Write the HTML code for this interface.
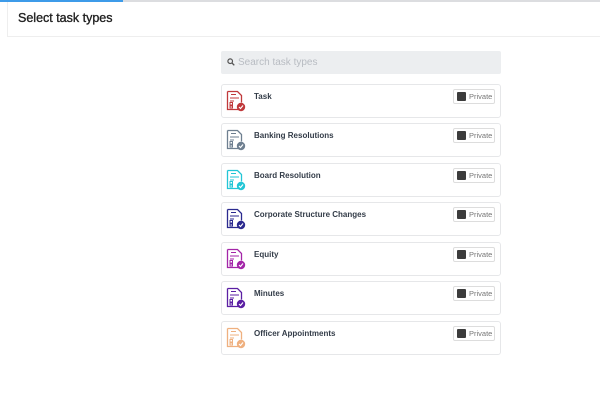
<!DOCTYPE html>
<html><head><meta charset="utf-8"><style>
*{box-sizing:border-box;margin:0;padding:0}
body{width:600px;height:400px;background:#fff;font-family:"Liberation Sans",sans-serif;position:relative;overflow:hidden}
.bar{position:absolute;top:0;left:0;width:600px;height:2px;background:#dcdde0}
.bar i{position:absolute;left:0;top:0;width:123px;height:2px;background:#3d9be9}
.hdr{position:absolute;top:2px;left:7px;right:0;height:35px;border-left:1px solid #eee;border-bottom:1px solid #eee}
.hdr span{position:absolute;left:10px;top:9px;font-size:12.5px;color:#222;-webkit-text-stroke:0.35px #222}
.search{position:absolute;left:221px;top:51px;width:280px;height:23px;background:#eceef0;border-radius:2px}
.search span{position:absolute;left:17px;top:6px;font-size:10px;color:#b8bcc2}
.card{position:absolute;left:221px;width:280px;height:34px;border:1px solid #e6e7e9;border-radius:3px;background:#fff}
.card b{position:absolute;left:32px;top:7px;font-size:8px;color:#333c48;font-weight:bold}
.priv{position:absolute;right:5px;top:4px;width:42px;height:15px;border:1px solid #ddd;border-radius:2px;font-size:7.5px;color:#777}
.priv i{position:absolute;left:3px;top:2px;width:9px;height:9px;background:#3c3c3c;border-radius:1px}
.priv span{position:absolute;left:15px;top:2px}
svg.ic{position:absolute;left:4px;top:5px}
</style></head><body>
<div class="bar"><i></i></div>
<div class="hdr"><span>Select task types</span></div>
<div class="search"><svg style="position:absolute;left:6px;top:7px" width="8" height="8" viewBox="0 0 8 8"><circle cx="3.2" cy="3.2" r="2.3" fill="none" stroke="#555" stroke-width="1.2"/><path d="M5 5l2.3 2.3" stroke="#555" stroke-width="1.3"/></svg><span>Search task types</span></div>

<div id="cards"></div>
<script>
var d=[["Task","#c0393b",84],["Banking Resolutions","#6e7f90",123],["Board Resolution","#22c6d6",163],["Corporate Structure Changes","#2b2a8f",202],["Equity","#a326a8",242],["Minutes","#5b1fa3",281],["Officer Appointments","#efb07f",321]];
var h="";
d.forEach(function(x){var c=x[1];
h+='<div class="card" style="top:'+x[2]+'px"><svg class="ic" width="20" height="22" viewBox="0 0 20 22"><path d="M1.5 1.5h10l4 4v7M14 19.5H1.5v-18" fill="none" stroke="'+c+'" stroke-width="1.3"/><path d="M5 4.5h5M4 8h9M4 11h4M4 12.5h2.5v2.5H4zM4 16h2.5v2H4z" stroke="'+c+'" stroke-width="1" fill="none"/><circle cx="15" cy="17" r="4.2" fill="'+c+'"/><path d="M13 17l1.5 1.5 2.5-3" stroke="#fff" stroke-width="1.1" fill="none"/></svg><b>'+x[0]+'</b><div class="priv"><i></i><span>Private</span></div></div>';});
document.getElementById("cards").innerHTML=h;
</script>
</body></html>
